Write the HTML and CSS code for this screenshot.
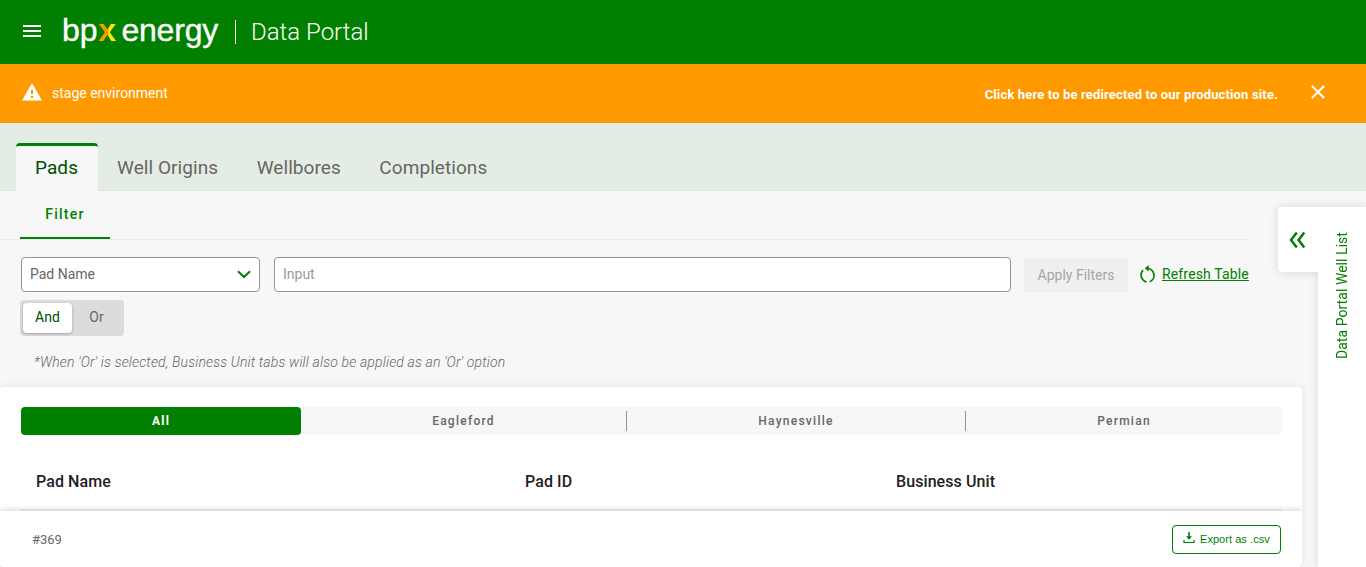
FILE: index.html
```html
<!DOCTYPE html>
<html lang="en">
<head>
<meta charset="utf-8">
<title>Data Portal</title>
<link rel="stylesheet" href="styles.css">
</head>
<body>
<header class="header">
  <svg class="menu-icon" width="18" height="12" viewBox="0 0 18 12"><path d="M0 1h18M0 6h18M0 11h18" stroke="#fff" stroke-width="2"/></svg>
  <div class="logo"><span>bp</span><span class="logo-x">x</span><span class="logo-energy">energy</span></div>
  <div class="divider"></div>
  <div class="app-title">Data Portal</div>
</header>
<div class="banner">
  <svg class="warning" width="20" height="18" viewBox="0 0 20 18"><path d="M10 0 20 17.5H0z" fill="#fff"/><path d="M9 6.8h2v4.4H9zM9 13h2v2H9z" fill="#ff9900"/></svg>
  <span class="environment">stage environment</span>
  <a class="redirect">Click here to be redirected to our production site.</a>
  <svg class="close" width="14" height="14" viewBox="0 0 14 14"><path d="m.7.7 12.6 12.6M13.300.7.7 13.300" stroke="#fff" stroke-width="2"/></svg>
</div>
<nav class="tabs">
  <a class="tab tab-active">Pads</a>
  <a class="tab">Well Origins</a>
  <a class="tab">Wellbores</a>
  <a class="tab">Completions</a>
</nav>
<main class="content">
  <div class="subtabs"><a class="subtab">Filter</a></div>
  <div class="filters">
    <div class="select"><span>Pad Name</span><svg width="14" height="9" viewBox="0 0 14 9"><path d="m1 1.200 6 5.800 6-5.800" fill="none" stroke="#007f00" stroke-width="2"/></svg></div>
    <div class="input">Input</div>
    <div class="apply">Apply Filters</div>
    <a class="refresh"><svg width="16" height="18" viewBox="0 0 16 18"><path d="M6.500 16.800A7 7 0 0 1 3 5.200M6.500 3.400A7 7 0 0 1 9.800 16.800" fill="none" stroke="#007f00" stroke-width="1.700"/><path d="M8.700 0v6.400L4.800 3.200z" fill="#007f00"/></svg><span>Refresh Table</span></a>
  </div>
  <div class="toggle"><span class="option option-on">And</span><span class="option">Or</span></div>
  <p class="note">*When 'Or' is selected, Business Unit tabs will also be applied as an 'Or' option</p>
  <section class="card">
    <div class="units">
      <a class="unit unit-active">All</a>
      <a class="unit unit-eagleford">Eagleford</a>
      <a class="unit unit-haynesville">Haynesville</a>
      <a class="unit unit-permian">Permian</a>
    </div>
    <div class="columns"><span>Pad Name</span><span>Pad ID</span><span>Business Unit</span></div>
    <footer class="footer">
      <span class="count">#369</span>
      <div class="export"><svg width="12" height="12" viewBox="0 0 12 12"><path d="M1 8v2.500h10V8" fill="none" stroke="#007f00" stroke-width="1.200"/><path d="M6 0v7" stroke="#007f00" stroke-width="1.600"/><path d="M3 4.300h6L6 7.800z" fill="#007f00"/></svg><span>Export as .csv</span></div>
    </footer>
  </section>
</main>
<aside class="drawer">
  <div class="drawer-handle"><svg width="17" height="16" viewBox="0 0 17 16"><path d="M7.800 .5 2 8l5.800 7.500M15.300.5 9.500 8l5.800 7.500" fill="none" stroke="#007f00" stroke-width="2.500"/></svg></div>
  <div class="drawer-panel"><span class="drawer-title">Data Portal Well List</span></div>
</aside>
</body>
</html>
```
FILE: styles.css
```css
* { box-sizing: border-box; }
body { margin: 0; height: 567px; overflow: hidden; position: relative; display: flex; flex-direction: column; background: #f7f7f7; font-family: Roboto, sans-serif; color: #666; }
.header { height: 64px; flex: none; display: flex; align-items: center; padding-left: 23px; background: #007f00; color: #fff; }
.menu-icon { margin-top: -3px; }
.logo { display: flex; width: 172px; margin: -4px 0 0 21px; font: 32px/40px "Liberation Sans", sans-serif; white-space: nowrap; -webkit-text-stroke: .35px #fff; }
.logo-x { margin-left: 1px; background: linear-gradient(90deg, #ff9900 50%, #ffe600 58%); background-clip: text; -webkit-background-clip: text; color: transparent; font-weight: 700; -webkit-text-stroke: 0; }
.logo-energy { margin-left: 5px; letter-spacing: -.2px; }
.divider { width: 1px; height: 24px; margin-left: 1px; background: #fff; }
.app-title { margin-left: 15px; font-size: 24px; font-weight: 300; }
.banner { height: 59px; flex: none; display: flex; align-items: center; padding: 0 41px 0 22px; background: #ff9900; color: #fff; }
.warning { margin-top: -4px; }
.environment { margin: -2px 0 0 10px; font-size: 14px; }
.redirect { margin: 1px 33px 0 auto; font-size: 13px; font-weight: 700; letter-spacing: .15px; }
.close { margin-top: -3px; }
.tabs { height: 68px; flex: none; display: flex; align-items: flex-end; padding-left: 16px; background: #e4ede4; box-shadow: inset 0 -1px #dfe8df; }
.tab { height: 48px; padding: 0 19.500px 0 19px; font-size: 19px; line-height: 49px; letter-spacing: .07px; white-space: nowrap; }
.tab-active { width: 82px; border-top: 3px solid #007f00; border-radius: 4px 4px 0 0; background: #f7f7f7; color: #004f00; line-height: 43px; }
.content { flex: 1; width: 1302px; display: flex; flex-direction: column; }
.subtabs { width: 1249px; height: 49px; flex: none; padding-left: 20px; border-bottom: 1px solid #eaeaea; }
.subtab { display: block; width: 90px; height: 48px; border-bottom: 2px solid #007f00; color: #007f00; font-size: 14px; font-weight: 500; line-height: 46px; letter-spacing: 1.250px; text-align: center; }
.filters { display: flex; height: 35px; margin: 17px 0 8px 21px; flex: none; font-size: 14px; }
.select, .input { border: 1px solid #949494; border-radius: 4px; background: #fff; line-height: 33px; padding-left: 8px; }
.select { display: flex; justify-content: space-between; align-items: center; width: 239px; padding-right: 8px; }
.input { width: 737px; margin-left: 14px; color: #999; }
.apply { width: 104px; height: 34px; margin: 1px 0 0 13px; border-radius: 4px; background: #efefef; color: #a6a6a6; line-height: 34px; text-align: center; }
.refresh { display: flex; align-items: center; gap: 6px; height: 34px; margin-left: 12px; color: #007f00; text-decoration: underline; letter-spacing: .15px; white-space: nowrap; }
.toggle { display: flex; flex: none; width: 104px; height: 36px; margin-left: 20px; padding: 3px; background: #dcdcdc; border-radius: 4px; }
.option { width: 49px; height: 30px; line-height: 28px; text-align: center; font-size: 14px; }
.option-on { background: #fff; color: #004f00; border-radius: 4px; box-shadow: 0 1px 3px #0004; }
.note { flex: none; margin: 15px 0 14px 34px; font-size: 14px; font-weight: 300; font-style: italic; line-height: 22px; letter-spacing: .155px; }
.card { display: flex; flex-direction: column; height: 180px; background: #fff; border-radius: 4px; box-shadow: 0 0 10px #00000014; }
.units { display: flex; align-items: center; flex: none; height: 28px; margin: 20px 20px 0 21px; background: #f7f7f7; border-radius: 4px; }
.unit { height: 20px; line-height: 20px; font-size: 12px; font-weight: 500; letter-spacing: 1.250px; text-align: center; }
.unit-active { width: 280px; height: 28px; line-height: 28px; border-radius: 4px; background: #007f00; color: #fff; font-weight: 700; }
.unit-eagleford { width: 326px; border-right: 1px solid #949494; }
.unit-haynesville { width: 339px; border-right: 1px solid #949494; }
.unit-permian { width: 316px; }
.columns { display: grid; grid-template-columns: 489px 371px 1fr; height: 76px; margin: 0 20px; padding-left: 16px; border-bottom: 2px solid #f0f0f0; color: #222; font-size: 16px; font-weight: 500; line-height: 93px; letter-spacing: .08px; }
.footer { display: flex; align-items: center; justify-content: space-between; flex: none; height: 56px; padding: 0 21px 0 32px; background: #fff; border-radius: 0 0 4px 4px; box-shadow: 0 -1px 6px #0000002b; clip-path: inset(-8px 0 0); }
.count { font-size: 13px; }
.export { display: flex; align-items: center; width: 109px; height: 29px; padding-left: 10px; gap: 5px; border: 1px solid #007f00; border-radius: 4px; color: #007f00; font: 11px "Liberation Sans", sans-serif; letter-spacing: .05px; white-space: nowrap; }
.export svg { margin-top: -2px; }
.drawer { position: absolute; top: 207px; right: 0; bottom: 0; display: flex; filter: drop-shadow(0 0 5px #0002); }
.drawer-handle { display: flex; align-items: center; justify-content: center; width: 40px; height: 65px; padding-right: 2px; background: #fff; border-radius: 4px 0 0 4px; }
.drawer-panel { width: 48px; padding: 25px 0 0 15px; background: #fff; }
.drawer-title { display: block; writing-mode: vertical-rl; transform: rotate(180deg); color: #007f00; font-size: 14px; line-height: 18px; letter-spacing: .05px; white-space: nowrap; }
```
